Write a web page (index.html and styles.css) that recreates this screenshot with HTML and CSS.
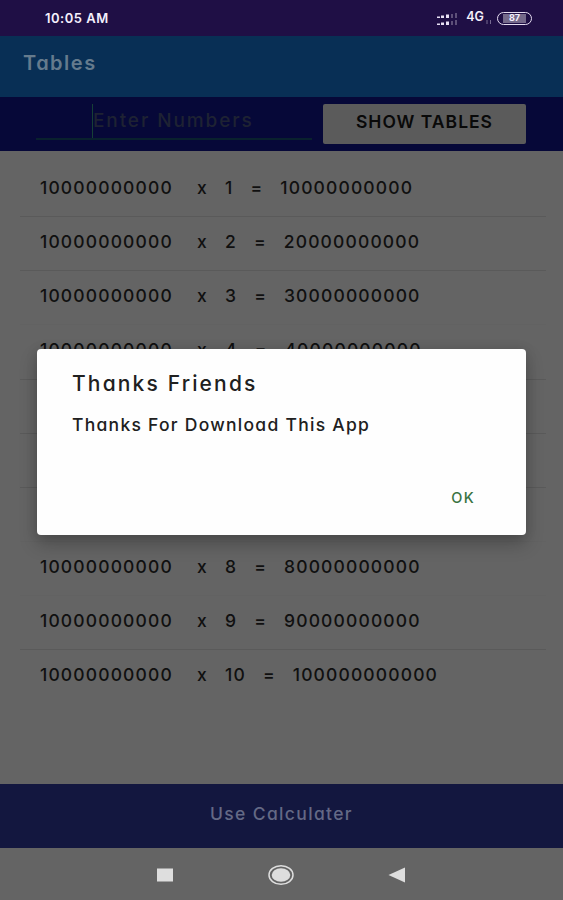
FILE: index.html
```html
<!DOCTYPE html>
<html lang="en">
<head>
<meta charset="utf-8">
<meta name="viewport" content="width=device-width, initial-scale=1">
<title>Tables</title>
<link rel="stylesheet" href="styles.css">
</head>
<body>
<div class="screen">
  <header class="status">
    <span class="clock">10:05 AM</span>
    <div class="indicators">
      <svg class="signal" width="22" height="13" viewBox="0 0 22 13">
        <g fill="#e8e0f4"><path d="M0 3.500h3v1.500H0zM4 2.500h3V5H4zM9 1.500h3V5H9zM0 10.500h3V12H0zM4 9.500h3V12H4zM9 8.500h3V12H9z"/></g>
        <g fill="#5d5079"><path d="M14 1h2v4h-2zM18 0h2v5h-2zM14 8h2v4h-2zM18 7h2v5h-2z"/></g>
      </svg>
      <span class="network">4G</span>
      <svg class="traffic" width="6" height="6" viewBox="0 0 6 6"><path d="M1 1v4M4.500 1v4" stroke="#766a90"/></svg>
      <div class="battery"><span>87</span></div>
    </div>
  </header>
  <div class="appbar"><h1>Tables</h1></div>
  <div class="toolbar">
    <div class="field"><span class="placeholder">Enter Numbers</span></div>
    <button class="show"><span>SHOW TABLES</span></button>
  </div>
  <main class="list">
    <div class="row"><span class="base">10000000000</span><span class="times">x</span><span>1</span><span class="eq">=</span><span>10000000000</span></div>
    <div class="row"><span class="base">10000000000</span><span class="times">x</span><span>2</span><span class="eq">=</span><span>20000000000</span></div>
    <div class="row faint"><span class="base">10000000000</span><span class="times">x</span><span>3</span><span class="eq">=</span><span>30000000000</span></div>
    <div class="row"><span class="base">10000000000</span><span class="times">x</span><span>4</span><span class="eq">=</span><span>40000000000</span></div>
    <div class="row"><span class="base">10000000000</span><span class="times">x</span><span>5</span><span class="eq">=</span><span>50000000000</span></div>
    <div class="row"><span class="base">10000000000</span><span class="times">x</span><span>6</span><span class="eq">=</span><span>60000000000</span></div>
    <div class="row faint"><span class="base">10000000000</span><span class="times">x</span><span>7</span><span class="eq">=</span><span>70000000000</span></div>
    <div class="row faint"><span class="base">10000000000</span><span class="times">x</span><span>8</span><span class="eq">=</span><span>80000000000</span></div>
    <div class="row"><span class="base">10000000000</span><span class="times">x</span><span>9</span><span class="eq">=</span><span>90000000000</span></div>
    <div class="row last"><span class="base">10000000000</span><span class="times">x</span><span>10</span><span class="eq">=</span><span>100000000000</span></div>
  </main>
  <footer class="calculator"><span>Use Calculater</span></footer>
  <nav class="navbar">
    <svg width="18" height="14" viewBox="0 0 18 14"><path d="M1 .5h16v13H1z" fill="#dedede"/></svg>
    <svg width="28" height="22" viewBox="0 0 28 22"><ellipse cx="14" cy="11" rx="12" ry="9.300" fill="none" stroke="#dedede" stroke-width="1.500"/><ellipse cx="14" cy="11" rx="9.300" ry="6.800" fill="#dedede"/></svg>
    <svg width="18" height="16" viewBox="0 0 18 16"><path d="M.5 8 17 .5v15z" fill="#dedede"/></svg>
  </nav>
  <section class="dialog" role="dialog">
    <h2>Thanks Friends</h2>
    <p>Thanks For Download This App</p>
    <button class="ok">OK</button>
  </section>
</div>
</body>
</html>
```
FILE: styles.css
```css
* { box-sizing: border-box; }
body { margin: 0; }
.screen {
  position: relative;
  display: flex;
  flex-direction: column;
  width: 563px;
  height: 900px;
  overflow: hidden;
  background: #646464;
  font-family: Inter, Roboto, sans-serif;
  font-feature-settings: "cv11" 1;
  white-space: nowrap;
}
h1, h2, p { margin: 0; }
button { border: 0; font: inherit; font-feature-settings: inherit; }
.status {
  height: 36px;
  flex: none;
  display: flex;
  align-items: center;
  justify-content: space-between;
  padding: 0 31px 1px 45px;
  background: #1f0f45;
  color: #f4effc;
}
.clock { font-size: 13px; font-weight: 600; letter-spacing: .5px; }
.indicators { display: flex; align-items: center; padding-top: 2px; }
.signal { margin-top: 1px; }
.network { margin-left: 7px; margin-top: -4px; font-size: 12.5px; font-weight: 600; }
.traffic { margin: 6px 5px 0 2px; }
.battery {
  width: 35px;
  height: 13px;
  border: 1.5px solid #e4dcf0;
  border-radius: 7px;
  padding: 1px 5px;
  display: flex;
}
.battery span {
  flex: 1;
  background: #74698a;
  font-size: 9px;
  line-height: 8px;
  font-weight: 700;
  text-align: center;
}
.appbar {
  height: 61px;
  flex: none;
  padding: 15px 23px;
  background: #082f55;
}
.appbar h1 { font-size: 20px; line-height: 24px; font-weight: 600; letter-spacing: 1.5px; color: #657b8d; }
.toolbar {
  height: 54px;
  flex: none;
  display: flex;
  padding: 7px 37px 7px 36px;
  gap: 11px;
  background: #060838;
}
.field { width: 276px; height: 36px; border-bottom: 2px solid #09212e; padding-left: 56px; }
.placeholder {
  display: block;
  width: 200px;
  height: 34px;
  border-left: 1px solid #164036;
  font-size: 19px;
  line-height: 33px;
  font-weight: 500;
  letter-spacing: 1.9px;
  color: #1e2233;
}
.show {
  width: 203px;
  height: 40px;
  padding: 0 0 5px;
  border-radius: 2px;
  background: #5b5b5b;
  color: #090909;
  font-size: 17.5px;
  font-weight: 600;
  letter-spacing: 1px;
}
.list { flex: 1; padding: 12px 17px 0 20px; }
.row {
  height: 54.15px;
  display: flex;
  align-items: center;
  padding: 0 0 5px 20px;
  border-bottom: 1px solid #5a5a5a;
  font-size: 17.5px;
  font-weight: 500;
  letter-spacing: 1.15px;
  color: #101010;
}
.row.faint { border-color: #626262; }
.row.last { border-color: transparent; }
.base { width: 157px; }
.times { width: 28px; }
.eq { margin: 0 17px; }
.calculator {
  height: 64px;
  flex: none;
  padding-top: 18px;
  text-align: center;
  background: #13173f;
  color: #646985;
  font-size: 17.5px;
  line-height: 24px;
  font-weight: 500;
  letter-spacing: 1.35px;
}
.navbar {
  height: 52px;
  flex: none;
  display: flex;
  justify-content: space-between;
  align-items: center;
  padding: 1px 157px 0 156px;
}
.dialog {
  position: absolute;
  left: 37px;
  top: 349px;
  width: 489px;
  height: 186px;
  padding: 21px 43px 24px 35px;
  border-radius: 4px;
  background: #fefefe;
  box-shadow: 0 9px 18px rgba(0, 0, 0, .24), 0 0 12px rgba(0, 0, 0, .1);
  display: flex;
  flex-direction: column;
  color: #202020;
}
.dialog h2 { font-size: 21px; line-height: 28px; font-weight: 500; letter-spacing: 2.15px; }
.dialog p { margin-top: 15px; font-size: 17.5px; line-height: 24px; font-weight: 500; letter-spacing: 1.27px; }
.ok {
  margin-top: auto;
  align-self: flex-end;
  padding: 4px 8px;
  background: none;
  color: #397342;
  font-size: 14.5px;
  line-height: 18px;
  font-weight: 500;
  letter-spacing: 1.3px;
}
```
